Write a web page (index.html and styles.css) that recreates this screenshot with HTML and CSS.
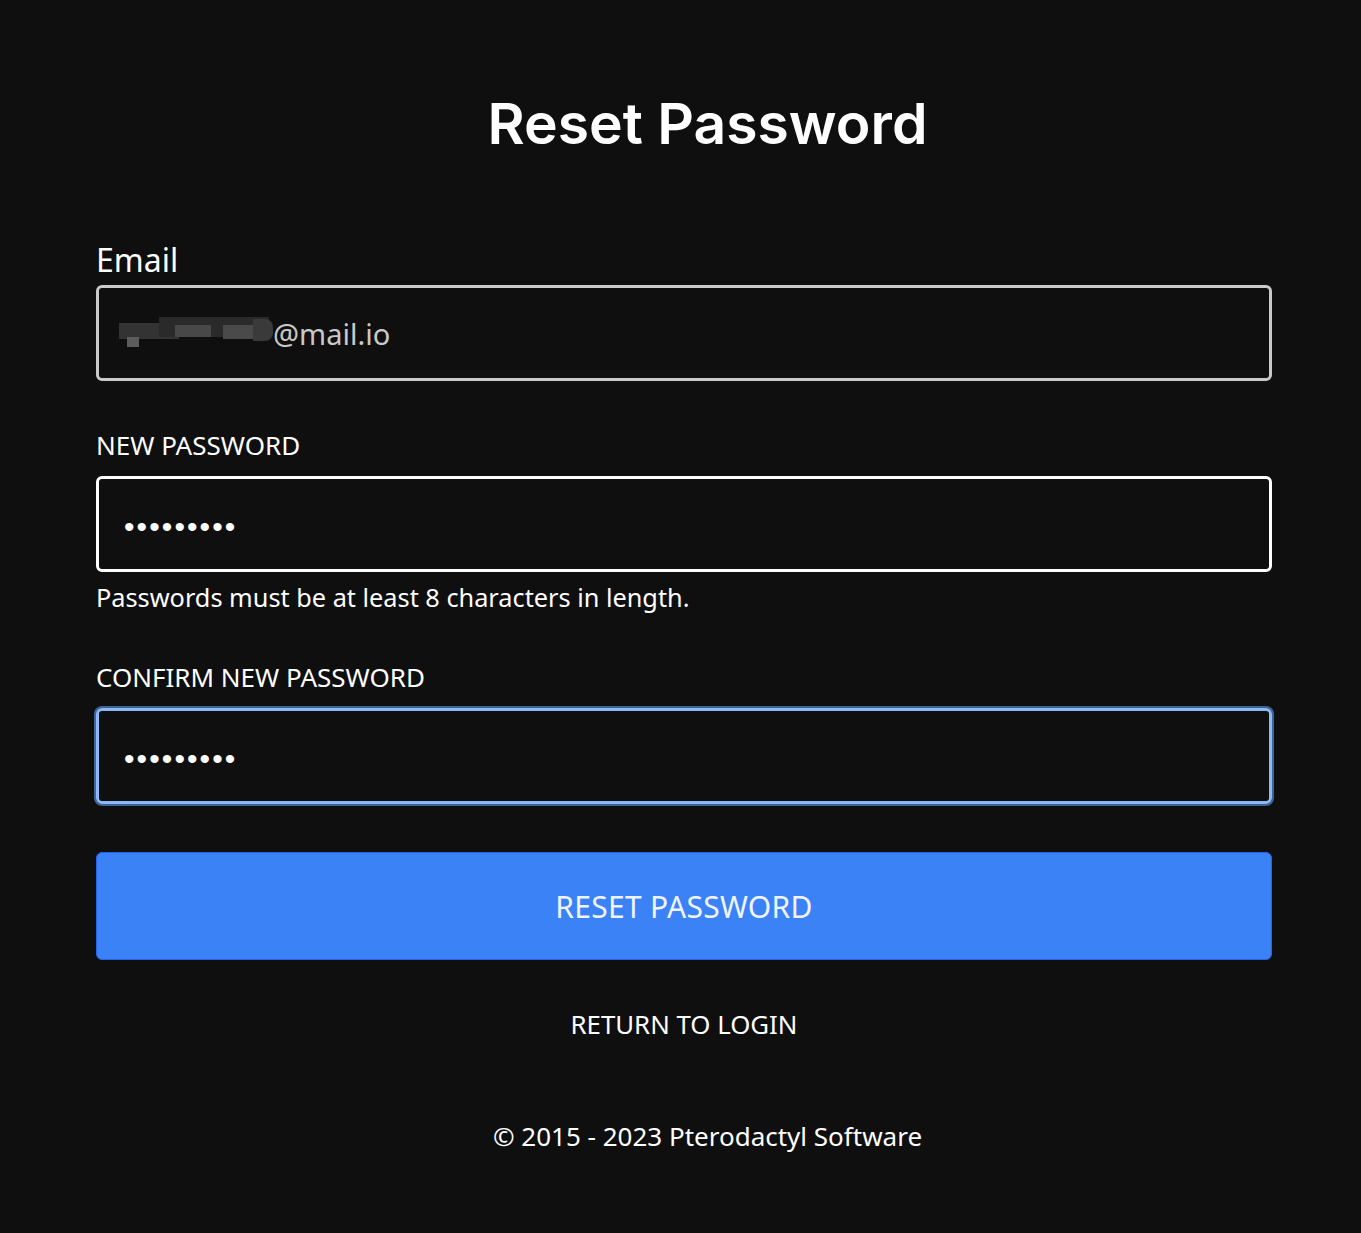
FILE: index.html
```html
<!DOCTYPE html>
<html>
<head>
<meta charset="utf-8">
<link rel="stylesheet" href="styles.css">
</head>
<body>
<div class="page">
  <h1 class="title">Reset Password</h1>
  <form class="form">
    <label class="email-label">Email</label>
    <div class="field email-field"><span class="blur"><i class="p1"></i><i class="p2"></i><i class="p3"></i><i class="p4"></i><i class="p5"></i><i class="p6"></i></span>@mail.io</div>
    <label class="label new-label">NEW PASSWORD</label>
    <div class="field pw-field"><span class="dots">•••••••••</span></div>
    <p class="help">Passwords must be at least 8 characters in length.</p>
    <label class="label confirm-label">CONFIRM NEW PASSWORD</label>
    <div class="field pw-field focus"><span class="dots">•••••••••</span></div>
    <button type="button" class="btn">RESET PASSWORD</button>
    <div class="return">RETURN TO LOGIN</div>
  </form>
  <p class="footer">© 2015 - 2023 Pterodactyl Software</p>
</div>
</body>
</html>
```
FILE: styles.css
```css
html, body { margin: 0; padding: 0; background: #0f0f0f; }
body { font-family: "Noto Sans", "Open Sans", sans-serif; color: #fff; }
.page { width: 1361px; height: 1233px; }
.title {
  margin: 0; padding: 86px 0 0 54px; height: 78px;
  text-align: center; font-family: "Inter", "Noto Sans", sans-serif;
  font-weight: 600; font-size: 57px; line-height: 76px; letter-spacing: 0;
}
.form { width: 1176px; margin: 0 0 0 96px; display: flex; flex-direction: column; }
.email-label { margin-top: 75px; font-size: 32px; line-height: 42px; height: 42px; padding-left: 0; }
.field {
  box-sizing: border-box; height: 96px; border: 3px solid #fff; border-radius: 6px;
  display: flex; align-items: center; padding-left: 25px;
}
.email-field { border-color: #c9c9c9; color: #c9c9c9; font-size: 29px; padding-left: 20px; margin-top: 4px; }
.blur { display: inline-flex; width: 154px; height: 32px; position: relative; }
.blur i { position: absolute; display: block; }
.blur .p1 { left: 0; top: 6px; width: 60px; height: 16px; background: #333; }
.blur .p2 { left: 40px; top: 0; width: 110px; height: 20px; background: #2a2a2a; }
.blur .p3 { left: 8px; top: 20px; width: 12px; height: 10px; background: #5c5c5c; }
.blur .p4 { left: 56px; top: 8px; width: 36px; height: 12px; background: #484848; }
.blur .p5 { left: 104px; top: 8px; width: 30px; height: 14px; background: #4a4a4a; }
.blur .p6 { left: 134px; top: 2px; width: 20px; height: 22px; background: #3a3a3a; border-radius: 0 8px 8px 0; }
.label { font-size: 26px; line-height: 30px; height: 30px; padding-left: 0; }
.new-label { margin-top: 49px; }
.pw-field { margin-top: 16px; }
.dots { font-size: 30px; letter-spacing: 2.1px; color: #fff; font-family: "Liberation Sans", sans-serif; line-height: 1; margin-top: 6px; }
.help { margin: 10px 0 0; font-size: 25.3px; line-height: 30px; padding-left: 0; }
.confirm-label { margin-top: 50px; }
.focus { border-color: #8db8f5; box-shadow: 0 0 0 2px #3d6494; margin-top: 16px; }
.btn {
  margin-top: 48px; height: 108px; background: #3b82f6; border: 1px solid #2563eb; border-radius: 6px;
  color: #f0f4ff; font-family: "Noto Sans", sans-serif; font-size: 30px; letter-spacing: 0.3px;
}
.return { margin-top: 48px; text-align: center; font-size: 25.8px; line-height: 32px; }
.footer { margin: 80px 0 0; padding-left: 54px; text-align: center; font-size: 26px; line-height: 32px; }
```
